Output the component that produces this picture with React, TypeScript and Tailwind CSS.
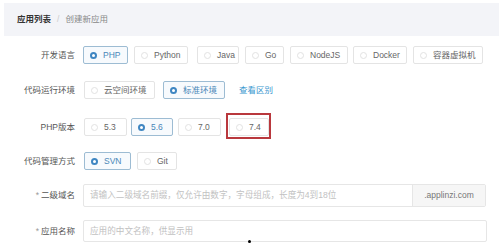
import React from "react";

type Opt = { label: string; w: number; ml?: number; checked?: boolean; marked?: boolean };

const font = "font-['Liberation_Sans','Noto_Sans_CJK_SC',sans-serif]";

function Radio({ checked }: { checked?: boolean }) {
  return checked ? (
    <span className="w-[7px] h-[7px] rounded-full border-2 border-[#3f86c2] bg-white shrink-0" />
  ) : (
    <span className="w-[7px] h-[7px] rounded-full border border-[#e2e2e2] bg-white shrink-0" />
  );
}

function OptionButton({ opt }: { opt: Opt }) {
  return (
    <div
      className={`relative h-[18px] flex items-center gap-[6px] pl-[6px] rounded-[2px] border text-[8.5px] shrink-0 ${
        opt.checked
          ? "border-[#9dbcd3] bg-[#f7fafd] text-[#4a87b8]"
          : "border-[#e4e4e4] bg-white text-[#666]"
      }`}
      style={{ width: opt.w, marginLeft: opt.ml ?? 0 }}
    >
      <Radio checked={opt.checked} />
      <span className="leading-none">{opt.label}</span>
      {opt.marked && (
        <span className="absolute -left-[4px] -right-[3px] -top-[6px] -bottom-[4px] border-2 border-[#b9383d]" />
      )}
    </div>
  );
}

function Row({ label, required, className, children }: { label: string; required?: boolean; className?: string; children: React.ReactNode }) {
  return (
    <div className={`flex items-center ${className ?? ""}`}>
      <div className="w-[72px] shrink-0 text-right text-[8.5px] text-[#555] leading-none pr-[1px]">
        {required && <span className="text-[#999] mr-[2px]">*</span>}
        {label}
      </div>
      <div className="ml-[7px] flex items-center">{children}</div>
    </div>
  );
}

const langs: Opt[] = [
  { label: "PHP", w: 45, checked: true },
  { label: "Python", w: 54, ml: 6 },
  { label: "Java", w: 42, ml: 9 },
  { label: "Go", w: 39, ml: 6 },
  { label: "NodeJS", w: 58, ml: 6 },
  { label: "Docker", w: 54, ml: 5 },
  { label: "容器虚拟机", w: 70, ml: 6 },
];

const envs: Opt[] = [
  { label: "云空间环境", w: 71, ml: 1 },
  { label: "标准环境", w: 62, ml: 8, checked: true },
];

const versions: Opt[] = [
  { label: "5.3", w: 43, ml: 1 },
  { label: "5.6", w: 42, ml: 4, checked: true },
  { label: "7.0", w: 43, ml: 5 },
  { label: "7.4", w: 40, ml: 8, marked: true },
];

const vcs: Opt[] = [
  { label: "SVN", w: 47, ml: 1, checked: true },
  { label: "Git", w: 40, ml: 6 },
];

export default function App() {
  return (
    <div className={`w-[499px] h-[248px] bg-white pl-[4px] pt-[3px] overflow-hidden ${font}`}>
      <div className="h-[33px] bg-[#f3f4f8] flex items-center pl-[13px] text-[8.5px] leading-none">
        <span className="font-bold text-[#333]">应用列表</span>
        <span className="mx-[6px] text-[#ccc]">/</span>
        <span className="text-[#888]">创建新应用</span>
      </div>

      <Row label="开发语言" className="mt-[10px]">
        {langs.map((o) => (
          <OptionButton key={o.label} opt={o} />
        ))}
      </Row>

      <Row label="代码运行环境" className="mt-[17px]">
        {envs.map((o) => (
          <OptionButton key={o.label} opt={o} />
        ))}
        <span className="ml-[14px] text-[8.5px] text-[#3d98cf] leading-none">查看区别</span>
      </Row>

      <Row label="PHP版本" className="mt-[19px]">
        {versions.map((o) => (
          <OptionButton key={o.label} opt={o} />
        ))}
      </Row>

      <Row label="代码管理方式" className="mt-[16px]">
        {vcs.map((o) => (
          <OptionButton key={o.label} opt={o} />
        ))}
      </Row>

      <Row label="二级域名" required className="mt-[14px]">
        <div className="w-[403px] h-[23px] flex border border-[#e6e6e6] rounded-[2px] text-[8.6px]">
          <div className="flex-1 flex items-center pl-[6px] text-[#c2c2c2]">
            请输入二级域名前缀，仅允许由数字，字母组成，长度为4到18位
          </div>
          <div className="w-[73px] flex items-center justify-center bg-[#f6f6f6] border-l border-[#e6e6e6] text-[#777] text-[8.5px]">
            .applinzi.com
          </div>
        </div>
      </Row>

      <Row label="应用名称" required className="mt-[13px]">
        <div className="relative w-[404px] h-[22px] flex items-center pl-[6px] border border-[#e6e6e6] rounded-[2px] text-[8.6px] text-[#c2c2c2]">
          应用的中文名称，供显示用
          <span className="absolute left-[164px] -bottom-[2px] w-[3px] h-[3px] rounded-full bg-black" />
        </div>
      </Row>
    </div>
  );
}
